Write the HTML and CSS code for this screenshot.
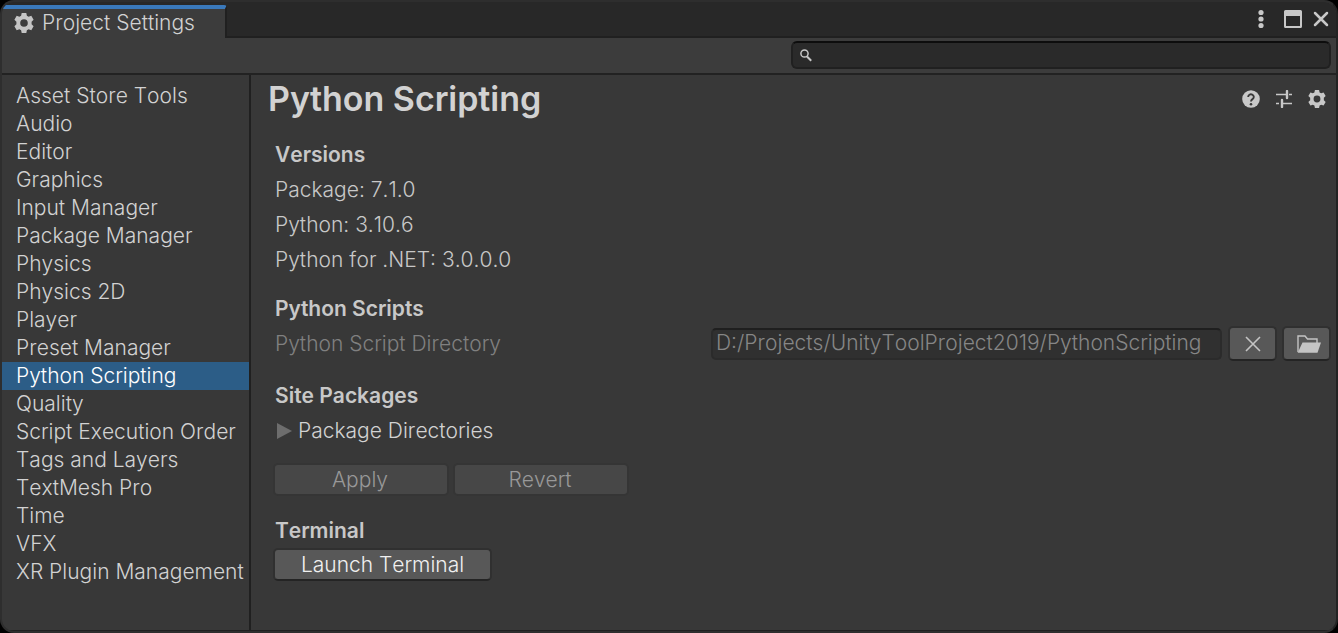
FILE: index.html
```
<!DOCTYPE html>
<html lang="en">
<head>
<meta charset="utf-8">
<title>Project Settings</title>
<link rel="stylesheet" href="styles.css">
</head>
<body>
<svg class="symbols" aria-hidden="true">
  <symbol id="gear" viewBox="0 0 20 20">
    <path fill="currentColor" fill-rule="evenodd" d="M7.7 0h4.6l.6 2.7 1.7 1 2.7-.9 2.3 4-2 1.900v2.600l2 1.900-2.300 4-2.700-.9-1.700 1-.6 2.700H7.700l-.6-2.700-1.700-1-2.700.9-2.300-4 2-1.900V8.700l-2-1.900 2.300-4 2.700.9 1.700-1zM10 6.200a3.800 3.800 0 1 0 0 7.600 3.800 3.800 0 0 0 0-7.600z"/>
  </symbol>
</svg>
<div class="window">
  <header class="tabbar">
    <div class="tab">
      <svg class="tab-icon"><use href="#gear"/></svg>
      <span>Project Settings</span>
    </div>
    <div class="window-controls">
      <button class="icon-button" type="button" aria-label="Menu">
        <svg width="6" height="20" viewBox="0 0 6 20" fill="currentColor"><circle cx="3" cy="3.500" r="2.600"/><circle cx="3" cy="10" r="2.600"/><circle cx="3" cy="16.500" r="2.600"/></svg>
      </button>
      <button class="icon-button" type="button" aria-label="Maximize">
        <svg width="18" height="18" viewBox="0 0 18 18"><path fill="currentColor" fill-rule="evenodd" d="M1.500 0h15A1.500 1.500 0 0 1 18 1.500v15a1.500 1.500 0 0 1-1.500 1.500h-15A1.500 1.500 0 0 1 0 16.500v-15A1.500 1.500 0 0 1 1.500 0zM2 6v10h14V6z"/></svg>
      </button>
      <button class="icon-button" type="button" aria-label="Close">
        <svg width="16" height="16" viewBox="0 0 16 16"><path d="M2 2l12 12M14 2L2 14" stroke="currentColor" stroke-width="2.500" stroke-linecap="round"/></svg>
      </button>
    </div>
  </header>
  <div class="toolbar">
    <label class="search">
      <svg width="12" height="13" viewBox="0 0 12 13" fill="none" stroke="currentColor"><circle cx="4.500" cy="4.500" r="3.600" stroke-width="1.500"/><path d="M7 7.500l4.200 4.300" stroke-width="2"/></svg>
      <input type="search" aria-label="Search settings">
    </label>
  </div>
  <div class="body">
    <nav class="sidebar">
      <a href="#">Asset Store Tools</a>
      <a href="#">Audio</a>
      <a href="#">Editor</a>
      <a href="#">Graphics</a>
      <a href="#">Input Manager</a>
      <a href="#">Package Manager</a>
      <a href="#">Physics</a>
      <a href="#">Physics 2D</a>
      <a href="#">Player</a>
      <a href="#">Preset Manager</a>
      <a href="#" class="selected" aria-current="page">Python Scripting</a>
      <a href="#">Quality</a>
      <a href="#">Script Execution Order</a>
      <a href="#">Tags and Layers</a>
      <a href="#">TextMesh Pro</a>
      <a href="#">Time</a>
      <a href="#">VFX</a>
      <a href="#">XR Plugin Management</a>
    </nav>
    <main class="main">
      <div class="title-row">
        <h1>Python Scripting</h1>
        <div class="title-actions">
          <button class="icon-button" type="button" aria-label="Help">
            <svg width="18" height="18" viewBox="0 0 18 18"><circle cx="9" cy="9" r="8.800" fill="currentColor"/><path d="M6.200 7a2.800 2.600 0 1 1 4.500 2C9.500 9.900 9 10.200 9 11.600" fill="none" stroke="#383838" stroke-width="1.900"/><circle cx="9" cy="14.200" r="1.300" fill="#383838"/></svg>
          </button>
          <button class="icon-button" type="button" aria-label="Presets">
            <svg width="18" height="18" viewBox="0 0 18 18" stroke="currentColor" fill="none"><path d="M1 4.500h10M14 4.500h3M1 13.500h3M8 13.500h9" stroke-width="1.300"/><path d="M12 1v7M7 10v7" stroke-width="2.400" stroke-linecap="round"/></svg>
          </button>
          <button class="icon-button" type="button" aria-label="Settings">
            <svg width="18" height="18"><use href="#gear"/></svg>
          </button>
        </div>
      </div>

      <section class="section">
        <h2>Versions</h2>
        <p>Package: 7.1.0</p>
        <p>Python: 3.10.6</p>
        <p>Python for .NET: 3.0.0.0</p>
      </section>

      <section class="section">
        <h2>Python Scripts</h2>
        <div class="field-row">
          <label for="script-dir">Python Script Directory</label>
          <input id="script-dir" type="text" value="D:/Projects/UnityToolProject2019/PythonScripting" disabled>
          <button class="button square" type="button" aria-label="Clear directory">
            <svg width="16" height="16" viewBox="0 0 16 16"><path d="M1 1l14 14M15 1L1 15" stroke="currentColor" stroke-width="1.600"/></svg>
          </button>
          <button class="button square browse" type="button" aria-label="Browse">
            <svg width="24" height="18" viewBox="0 0 24 18"><path d="M1 17V1h7l2.500 3H20v4" fill="none" stroke="currentColor" stroke-width="1.400"/><path d="M5.500 7.500H24L20.500 17.700H.7z" fill="currentColor"/></svg>
          </button>
        </div>
      </section>

      <section class="section">
        <h2>Site Packages</h2>
        <button class="foldout" type="button" aria-expanded="false">
          <svg width="15" height="16" viewBox="0 0 15 16"><path d="M0 0l15 8-15 8z" fill="#6d6d6d"/></svg>
          <span>Package Directories</span>
        </button>
      </section>

      <div class="actions">
        <button class="button" type="button" disabled>Apply</button>
        <button class="button" type="button" disabled>Revert</button>
      </div>

      <section class="section">
        <h2>Terminal</h2>
        <button class="button launch" type="button">Launch Terminal</button>
      </section>
    </main>
  </div>
</div>
</body>
</html>
```
FILE: styles.css
```
* {
  box-sizing: border-box;
}

body {
  margin: 0;
  background: #000;
  color: #c8c8c8;
  font: 360 21px/28px Inter, sans-serif;
  font-kerning: none;
  font-variation-settings: "opsz" 32;
}

button,
input {
  font: inherit;
  font-kerning: inherit;
  font-variation-settings: inherit;
  color: inherit;
}

h1,
h2,
p {
  margin: 0;
}

svg {
  display: block;
  flex: none;
}

.symbols {
  position: absolute;
  width: 0;
  height: 0;
}

.window {
  display: flex;
  flex-direction: column;
  min-height: 100vh;
  border: 2px solid #2e2e2e;
  border-right-color: #232323;
  border-radius: 14px;
  background: #383838;
  overflow: hidden;
}

.tabbar {
  display: flex;
  justify-content: space-between;
  height: 36px;
  background: #282828;
  box-shadow: inset 0 -2px #202020;
}

.tab {
  display: flex;
  align-items: center;
  gap: 8px;
  padding: 0 30px 2px 12px;
  margin-top: 3px;
  border-top: 4px solid #3a79bb;
  border-right: 2px solid #202020;
  border-top-right-radius: 3px;
  background: #3c3c3c;
  color: #d2d2d2;
}

.tab-icon {
  width: 20px;
  height: 20px;
  color: #c4c4c4;
}

.window-controls {
  display: flex;
  align-items: center;
  gap: 11px;
  padding: 0 7px 2px 0;
}

.icon-button {
  display: flex;
  padding: 0;
  border: 0;
  background: none;
}

.window-controls .icon-button:first-child {
  margin-right: 9px;
}

.toolbar {
  display: flex;
  justify-content: flex-end;
  height: 37px;
  padding: 3px 5px 0 0;
  border-bottom: 2px solid #222;
  background: #3c3c3c;
}

.search {
  display: flex;
  align-items: center;
  gap: 8px;
  width: 540px;
  height: 28px;
  padding: 0 8px 0 7px;
  border: 2px solid #202020;
  border-top-color: #0d0d0d;
  border-radius: 6px;
  background: #2a2a2a;
}

.search input {
  flex: 1;
  min-width: 0;
  height: 24px;
  padding: 0;
  border: 0;
  outline: 0;
  background: none;
}

.body {
  display: flex;
  flex: 1;
  border-bottom: 1px solid #202020;
}

.sidebar {
  flex: none;
  width: 249px;
  padding-top: 7px;
  border-right: 2px solid #202020;
  color: #d2d2d2;
}

.sidebar a {
  display: block;
  padding-left: 14px;
  color: inherit;
  text-decoration: none;
  white-space: nowrap;
}

.sidebar .selected {
  background: #2c5d87;
  color: #fff;
}

.main {
  flex: 1;
  min-width: 0;
  padding: 0 5px 0 24px;
  line-height: 35px;
}

.title-row {
  display: flex;
  align-items: center;
  justify-content: space-between;
  height: 48px;
  margin: 0 5px 14px -7px;
}

h1 {
  padding-bottom: 2px;
  color: #d2d2d2;
  font-size: 34px;
  font-weight: 600;
}

.title-actions {
  display: flex;
  gap: 15px;
}

h2 {
  font-size: 21px;
  font-weight: 600;
}

.section {
  margin-bottom: 17px;
}

.section:first-of-type {
  margin-bottom: 14px;
}

.field-row {
  display: flex;
  align-items: center;
  gap: 6px;
}

.field-row label {
  flex: none;
  width: 430px;
  color: #808080;
}

.field-row input {
  flex: 1;
  min-width: 0;
  height: 32px;
  padding: 0 3px 2px;
  border: 2px solid #2b2b2b;
  border-top-color: #1f1f1f;
  border-radius: 5px;
  background: #303030;
  color: #868686;
}

.button {
  display: flex;
  align-items: center;
  justify-content: center;
  height: 33px;
  padding: 0;
  border: 2px solid #303030;
  border-bottom-color: #242424;
  border-radius: 5px;
  background: #585858;
  color: #f0f0f0;
  line-height: 28px;
}

.button:disabled {
  border-color: #353535;
  background: #474747;
  color: #989898;
}

.field-row .button {
  height: 35px;
}

.square {
  width: 49px;
  color: #c4c4c4;
}

.field-row .square + .square {
  margin-left: -1px;
}

.browse {
  padding-left: 4px;
}

.foldout {
  display: flex;
  align-items: center;
  gap: 6px;
  padding: 0 0 0 2px;
  border: 0;
  background: none;
  color: #d2d2d2;
  line-height: 35px;
}

.actions {
  display: flex;
  gap: 4px;
  margin: -2px 0 17px -2px;
}

.actions .button {
  width: 176px;
  padding-right: 2px;
}

.launch {
  width: 219px;
  margin-left: -2px;
}
```
